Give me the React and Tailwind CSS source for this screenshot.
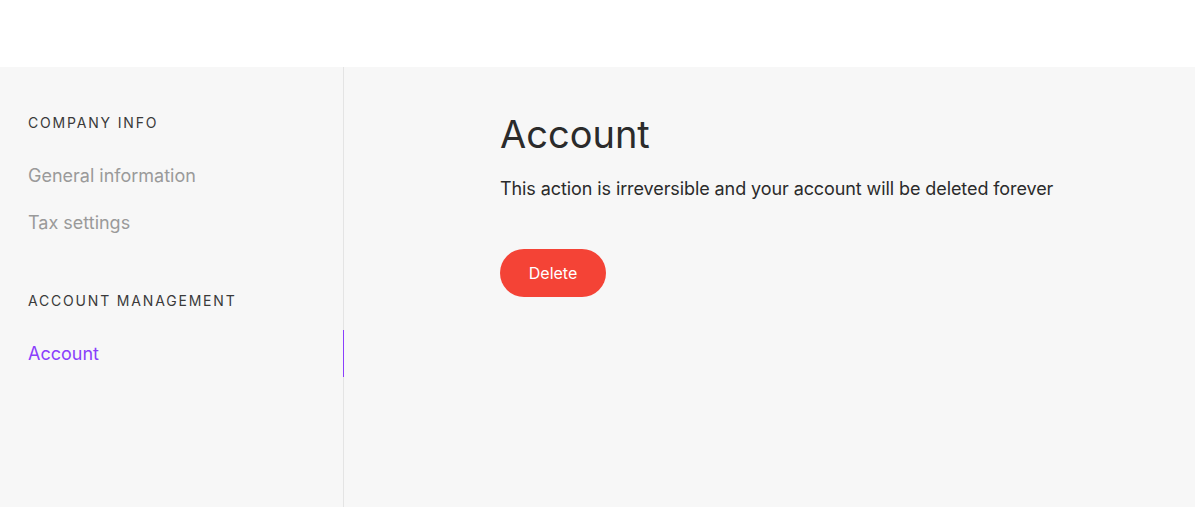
export default function App() {
  const font = { fontFamily: "Inter, 'Liberation Sans', sans-serif" };
  return (
    <div className="min-h-[507px] bg-white text-[#2b2b2b]" style={font}>
      <div className="h-[67px] bg-white" />
      <div className="flex h-[440px] bg-[#f7f7f7]">
        {/* Sidebar */}
        <aside className="w-[344px] shrink-0 border-r border-[#e4e4e4] pt-[47px]">
          <div className="px-7">
            <h4 className="text-[14px] leading-[18px] tracking-[0.13em] text-[#3a3a3a]">COMPANY INFO</h4>
            <nav className="mt-[30px] flex flex-col gap-[20px]">
              <a className="text-[18px] leading-[27px] text-[#9a9a9a]">General information</a>
              <a className="text-[18px] leading-[27px] text-[#9a9a9a]">Tax settings</a>
            </nav>
          </div>
          <div className="mt-[56px] px-7">
            <h4 className="text-[14px] leading-[18px] tracking-[0.13em] text-[#3a3a3a]">ACCOUNT MANAGEMENT</h4>
          </div>
          <div className="relative mt-[20px] px-7">
            <a className="block text-[18px] leading-[47px] text-[#8a3ffc]">Account</a>
            <span className="absolute right-[-1px] top-0 h-full w-px bg-[#8a3ffc]" />
          </div>
        </aside>

        {/* Content */}
        <main className="flex-1 pl-[156px] pt-[44px]">
          <h1 className="text-[38px] leading-[46px] text-[#2b2b2b]">Account</h1>
          <p className="mt-[18px] text-[18px] leading-[27px] tracking-[-0.005em] text-[#2b2b2b]">
            This action is irreversible and your account will be deleted forever
          </p>
          <button className="mt-[47px] h-[48px] w-[106px] rounded-full bg-[#f44336] text-[16px] text-white">
            Delete
          </button>
        </main>
      </div>
    </div>
  );
}
